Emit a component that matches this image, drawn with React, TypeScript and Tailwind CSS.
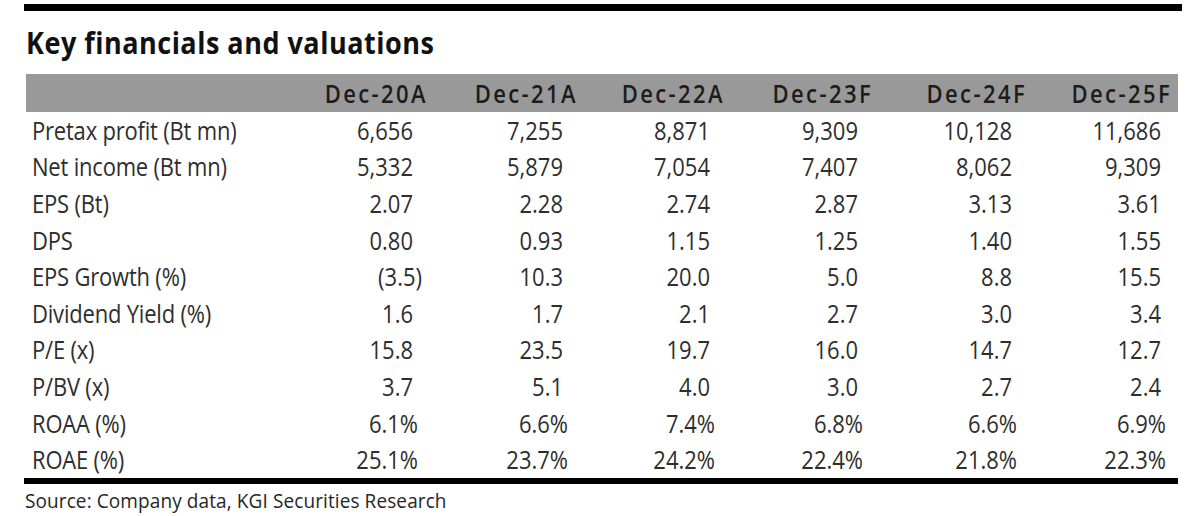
import React from "react";

const rows: { label: string; cells: string[] }[] = [
  { label: "Pretax profit (Bt mn)", cells: ["6,656", "7,255", "8,871", "9,309", "10,128", "11,686"] },
  { label: "Net income (Bt mn)", cells: ["5,332", "5,879", "7,054", "7,407", "8,062", "9,309"] },
  { label: "EPS (Bt)", cells: ["2.07", "2.28", "2.74", "2.87", "3.13", "3.61"] },
  { label: "DPS", cells: ["0.80", "0.93", "1.15", "1.25", "1.40", "1.55"] },
  { label: "EPS Growth (%)", cells: ["(3.5)", "10.3", "20.0", "5.0", "8.8", "15.5"] },
  { label: "Dividend Yield (%)", cells: ["1.6", "1.7", "2.1", "2.7", "3.0", "3.4"] },
  { label: "P/E (x)", cells: ["15.8", "23.5", "19.7", "16.0", "14.7", "12.7"] },
  { label: "P/BV (x)", cells: ["3.7", "5.1", "4.0", "3.0", "2.7", "2.4"] },
  { label: "ROAA (%)", cells: ["6.1%", "6.6%", "7.4%", "6.8%", "6.6%", "6.9%"] },
  { label: "ROAE (%)", cells: ["25.1%", "23.7%", "24.2%", "22.4%", "21.8%", "22.3%"] },
];

const headers = ["Dec-20A", "Dec-21A", "Dec-22A", "Dec-23F", "Dec-24F", "Dec-25F"];

const grid = "grid grid-cols-[256px_150px_150px_147px_148px_154px_149px]";

function cellClass(v: string) {
  if (v.endsWith("%")) return "pr-[12px]";
  if (v.startsWith("(")) return "pr-[8px]";
  return "pr-[17px]";
}

export default function App() {
  return (
    <div
      className="w-[1200px] h-[516px] bg-white text-[#2e2e2e] overflow-hidden"
      style={{ fontFamily: '"Open Sans", "Noto Sans", sans-serif' }}
    >
      <div className="pl-[24px] pt-[4px]">
        <div className="w-[1158px] h-[7px] bg-black" />
        <div className="h-[63px] flex items-center pl-[2px] pt-[2px] text-[27px] font-bold text-[#111] tracking-[0.5px]">
          <span className="inline-block scale-y-[1.12]">Key financials and valuations</span>
        </div>
        <div className="w-[1154px]">
          <div className={`${grid} h-[38px] bg-[#999999] ml-[2px] items-center text-[22px] font-semibold text-[#1c1c1c] tracking-[2.4px]`}>
            <div />
            {headers.map((h, i) => (
              <div key={h} className={`text-right ${i === 5 ? "pr-[8px]" : "pr-[4px]"}`}>
                <span className="inline-block scale-y-[1.13]">{h}</span>
              </div>
            ))}
          </div>
          {rows.map((r) => (
            <div key={r.label} className={`${grid} h-[36.6px] items-center text-[22px]`}>
              <div className="pl-[8px] whitespace-nowrap tracking-[-0.2px]">
                <span className="inline-block scale-y-[1.13]">{r.label}</span>
              </div>
              {r.cells.map((c, i) => (
                <div key={i} className={`text-right ${cellClass(c)}`}>
                  <span className="inline-block scale-y-[1.13]">{c}</span>
                </div>
              ))}
            </div>
          ))}
          <div className="h-[6px] bg-black" />
        </div>
        <div className="pt-[3px] pl-[1px] text-[19px] text-[#262626] tracking-[0.1px]">
          <span className="inline-block scale-y-[1.05]">Source: Company data, KGI Securities Research</span>
        </div>
      </div>
    </div>
  );
}
